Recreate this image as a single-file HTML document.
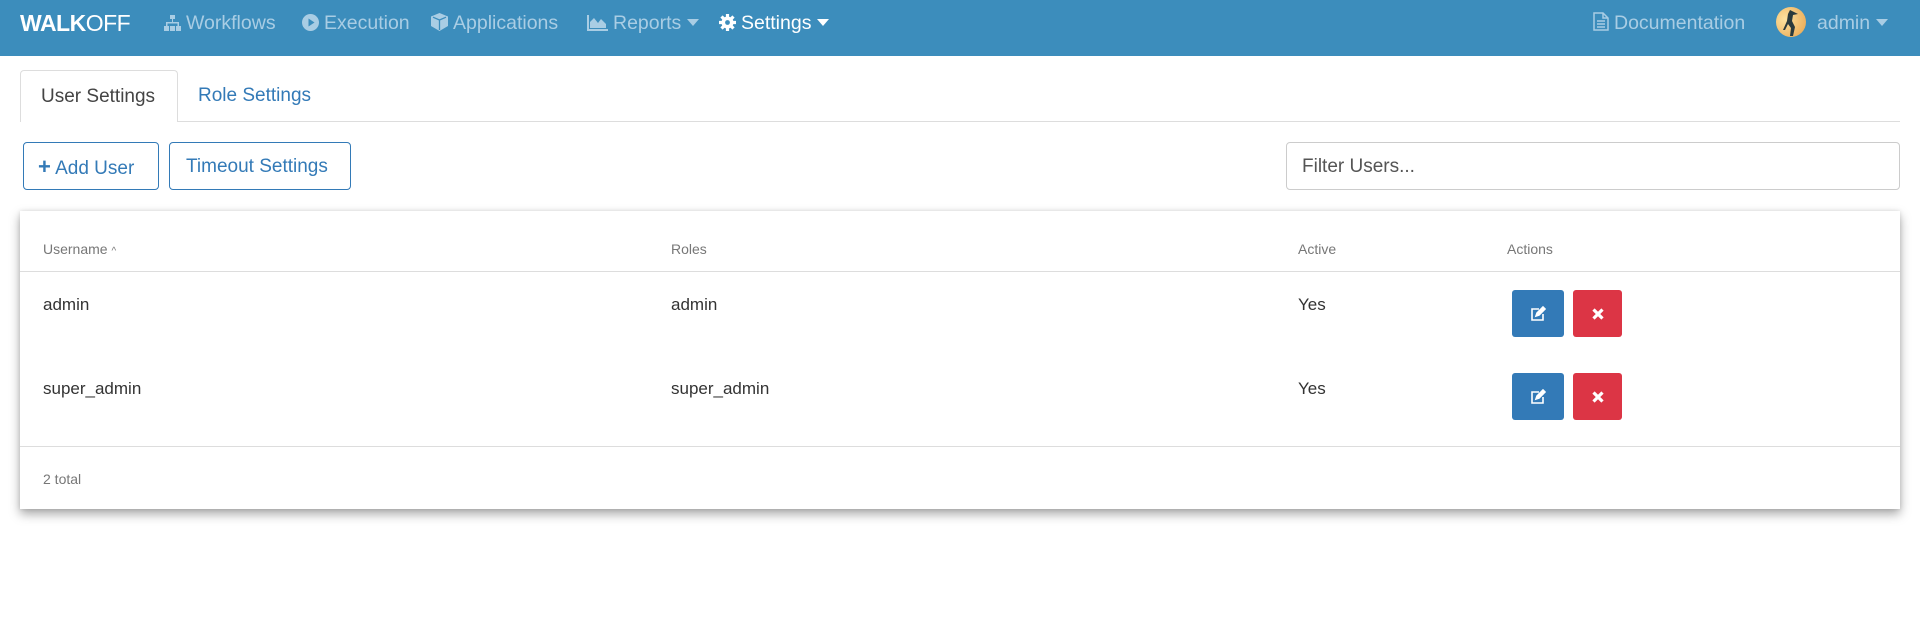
<!DOCTYPE html>
<html><head><meta charset="utf-8"><style>
*{box-sizing:border-box;margin:0;padding:0}
body{width:1920px;height:623px;background:#fff;font-family:"Liberation Sans",sans-serif;position:relative;overflow:hidden;color:#333}
.nav{position:absolute;left:0;top:0;width:1920px;height:56px;background:#3c8dbc}
.a{position:absolute;top:0;height:56px;line-height:47px;font-size:19.5px;color:#a9cde4;white-space:nowrap}
.a svg{vertical-align:-2px;margin-right:5px}
.caret{display:inline-block;width:0;height:0;border-left:6px solid transparent;border-right:6px solid transparent;border-top:7px solid currentColor;margin-left:6px;vertical-align:3px}
.brand{left:20px;color:#fff;font-size:23px;letter-spacing:-.5px}
.tabs{position:absolute;left:20px;top:121px;width:1880px;border-top:1px solid #ddd}
.tab{position:absolute;top:70px;height:52px;line-height:52px;font-size:19px;padding:0 20px}
.tab1{left:20px;width:158px;border:1px solid #ddd;border-bottom:none;border-radius:4px 4px 0 0;background:#fff;color:#444}
.tab2{left:178px;color:#337ab7}
.btn{position:absolute;top:142px;height:48px;line-height:48px;border:1px solid #337ab7;border-radius:4px;color:#337ab7;font-size:19px;padding:0 16px}
.inp{position:absolute;left:1286px;top:142px;width:614px;height:48px;border:1px solid #ccc;border-radius:4px;font-size:19px;color:#555;padding-left:15px;line-height:48px}
.card{position:absolute;left:20px;top:211px;width:1880px;height:298px;background:#fff;box-shadow:0 5px 10px rgba(0,0,0,.35),0 0 4px rgba(0,0,0,.1)}
.t{position:absolute;white-space:nowrap}
.h{font-size:14px;color:#777;top:30px}
.c{font-size:17px;color:#333}
.hr{position:absolute;left:0;width:1880px;border-top:1px solid #ddd}
.ib{position:absolute;width:52px;height:47px;border-radius:3px;display:flex;align-items:center;justify-content:center}
.e{background:#337ab7}.d{background:#dc3545;width:49px}
</style></head><body>
<div class="nav">
<div class="a brand"><b style="color:#fff">WALK</b>OFF</div>
<div class="a" style="left:164px"><svg width="17" height="16" viewBox="0 0 17 16" fill="#a9cde4"><rect x="6" y="0" width="5" height="4"/><rect x="8" y="4" width="1" height="4"/><rect x="2" y="7" width="13" height="1.5"/><rect x="2" y="7" width="1.5" height="4"/><rect x="13.5" y="7" width="1.5" height="4"/><rect x="0" y="11" width="5" height="5"/><rect x="6" y="11" width="5" height="5"/><rect x="12" y="11" width="5" height="5"/></svg>Workflows</div>
<div class="a" style="left:302px"><svg width="17" height="17" viewBox="0 0 17 17"><circle cx="8.5" cy="8.5" r="8.5" fill="#a9cde4"/><path d="M6.5 4.5L12.5 8.5L6.5 12.5Z" fill="#3c8dbc"/></svg>Execution</div>
<div class="a" style="left:431px"><svg width="17" height="18" viewBox="0 0 17 18" fill="#a9cde4"><path d="M8.5 0L17 3.5V13L8.5 18L0 13V3.5Z"/><path d="M8.5 7L15 4.2M8.5 7L2 4.2M8.5 7V17" stroke="#3c8dbc" stroke-width="1.3" fill="none"/></svg>Applications</div>
<div class="a" style="left:587px"><svg width="21" height="16" viewBox="0 0 21 16" fill="#a9cde4"><path d="M0 0H2V14H21V16H0Z"/><path d="M3 13V7L7 3L11 8L14 4L19 9V13Z"/></svg>Reports<span class="caret"></span></div>
<div class="a" style="left:719px;color:#fff"><svg width="17" height="17" viewBox="0 0 17 17"><circle cx="8.5" cy="8.5" r="6" fill="#fff"/><g stroke="#fff" stroke-width="3.2"><path d="M8.5 0V17M0 8.5H17M2.5 2.5L14.5 14.5M14.5 2.5L2.5 14.5"/></g><circle cx="8.5" cy="8.5" r="2.4" fill="#3c8dbc"/></svg>Settings<span class="caret"></span></div>
<div class="a" style="left:1593px"><svg width="16" height="19" viewBox="0 0 16 19" fill="none" stroke="#a9cde4" stroke-width="1.5"><path d="M1 1H10L15 6V18H1Z"/><path d="M10 1V6H15M4 9H12M4 12H12M4 15H12"/></svg>Documentation</div>
<div style="position:absolute;left:1776px;top:7px;width:30px;height:30px;border-radius:50%;background:radial-gradient(circle at 30% 40%,#fde2a0,#e8a24a)"><svg width="30" height="30" viewBox="0 0 30 30"><path d="M14 3L18 5L22 7L17 8L16 14L19 20L17 29L14 29L15 21L12 17L9 23L7 23L11 14L12 7Z" fill="#2b3a3c"/></svg></div>
<div class="a" style="left:1817px">admin<span class="caret"></span></div>
</div>
<div class="tabs"></div>
<div class="tab tab1">User Settings</div>
<div class="tab tab2">Role Settings</div>
<div class="btn" style="left:23px;width:136px;padding:0 14px"><b style="font-size:22px">+</b> Add User</div>
<div class="btn" style="left:169px;width:182px">Timeout Settings</div>
<div class="inp">Filter Users...</div>
<div class="card">
<div class="t h" style="left:23px">Username <span style="font-size:10px">^</span></div>
<div class="t h" style="left:651px">Roles</div>
<div class="t h" style="left:1278px">Active</div>
<div class="t h" style="left:1487px">Actions</div>
<div class="hr" style="top:60px"></div>
<div class="t c" style="left:23px;top:84px">admin</div>
<div class="t c" style="left:651px;top:84px">admin</div>
<div class="t c" style="left:1278px;top:84px">Yes</div>
<div class="ib e" style="left:1492px;top:79px"><svg width="16" height="16" viewBox="0 0 16 16" fill="none" stroke="#fff" stroke-width="1.6"><path d="M9 3H2V14H13V8"/><path d="M6 10L7 7L13 1L15 3L9 9Z" fill="#fff"/></svg></div>
<div class="ib d" style="left:1553px;top:79px"><svg width="12" height="12" viewBox="0 0 12 12" stroke="#fff" stroke-width="3.2"><path d="M1.5 1.5L10.5 10.5M10.5 1.5L1.5 10.5"/></svg></div>
<div class="t c" style="left:23px;top:168px">super_admin</div>
<div class="t c" style="left:651px;top:168px">super_admin</div>
<div class="t c" style="left:1278px;top:168px">Yes</div>
<div class="ib e" style="left:1492px;top:162px"><svg width="16" height="16" viewBox="0 0 16 16" fill="none" stroke="#fff" stroke-width="1.6"><path d="M9 3H2V14H13V8"/><path d="M6 10L7 7L13 1L15 3L9 9Z" fill="#fff"/></svg></div>
<div class="ib d" style="left:1553px;top:162px"><svg width="12" height="12" viewBox="0 0 12 12" stroke="#fff" stroke-width="3.2"><path d="M1.5 1.5L10.5 10.5M10.5 1.5L1.5 10.5"/></svg></div>
<div class="hr" style="top:235px"></div>
<div class="t" style="left:23px;top:260px;font-size:14px;color:#777">2 total</div>
</div>
</body></html>
